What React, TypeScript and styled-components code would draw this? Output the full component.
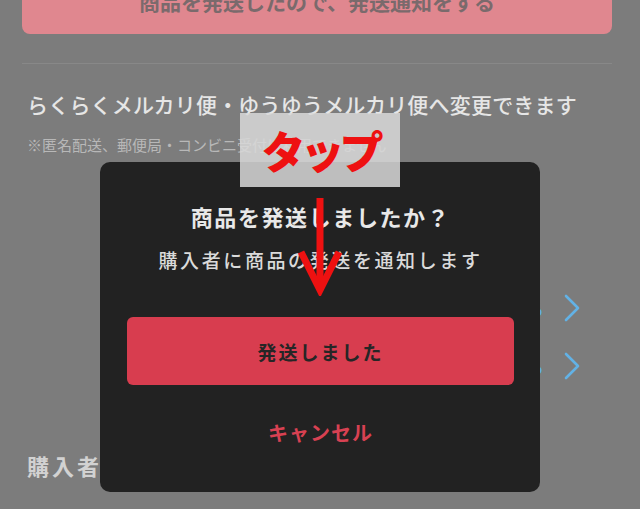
import React from 'react';
import styled, { createGlobalStyle } from 'styled-components';

const GlobalStyle = createGlobalStyle`
    html, body {
        margin: 0;
        padding: 0;
        background: #7c7c7c;
        overflow: hidden;
    }
    * {
        box-sizing: border-box;
    }
`;

const FONT = `'Noto Sans CJK JP', 'Noto Sans', sans-serif`;

const Screen = styled.div`
    position: relative;
    width: 640px;
    height: 509px;
    overflow: hidden;
    background: #7c7c7c;
    font-family: ${FONT};
`;

const Content = styled.div`
    display: flex;
    flex-direction: column;
    padding: 0 28px 0 22px;
`;

const NotifyButton = styled.div`
    display: flex;
    align-items: center;
    justify-content: center;
    height: 64px;
    margin-top: -30px;
    padding-bottom: 2px;
    border-radius: 0 0 8px 8px;
    background: #e0878f;
    color: #7a6a6c;
    font-size: 21px;
    font-weight: 700;
`;

const Divider = styled.hr`
    margin: 29px 0 0;
    border: none;
    height: 1px;
    background: #888888;
`;

const ShippingTitle = styled.div`
    margin-top: 25px;
    padding-left: 5px;
    font-size: 21px;
    font-weight: 500;
    line-height: 30px;
    color: #e6e6e6;
    letter-spacing: 0.2px;
`;

const ShippingNote = styled.div`
    margin-top: 15px;
    padding-left: 5px;
    font-size: 15px;
    line-height: 22px;
    color: #b8b8b8;
`;

const Rows = styled.div`
    display: flex;
    flex-direction: column;
    margin-top: 123px;
`;

const Row = styled.div`
    display: flex;
    align-items: center;
    justify-content: flex-end;
    height: 58px;
    padding-right: 32px;
    gap: 20px;
`;

const RowValue = styled.span`
    font-size: 17px;
    color: #62b2e6;
`;

const SectionHeading = styled.div`
    margin-top: 55px;
    padding-left: 5px;
    font-size: 22px;
    font-weight: 700;
    line-height: 30px;
    color: #d2d2d2;
    letter-spacing: 3px;
`;

const Dialog = styled.div`
    position: absolute;
    left: 100px;
    top: 162px;
    width: 440px;
    height: 330px;
    display: flex;
    flex-direction: column;
    align-items: center;
    padding: 39px 26px 0 27px;
    background: #222222;
    border-radius: 10px;
`;

const DialogTitle = styled.div`
    font-size: 22px;
    font-weight: 700;
    line-height: 30px;
    color: #e8e8e8;
    letter-spacing: 1.6px;
`;

const DialogText = styled.div`
    margin-top: 16px;
    font-size: 19px;
    font-weight: 500;
    line-height: 26px;
    color: #dadada;
    letter-spacing: 2.6px;
`;

const PrimaryButton = styled.button`
    width: 100%;
    height: 68px;
    margin-top: 44px;
    border: none;
    border-radius: 6px;
    background: #d83d4f;
    color: #262626;
    font-family: ${FONT};
    font-size: 19px;
    font-weight: 700;
    letter-spacing: 2px;
`;

const CancelButton = styled.button`
    margin-top: 32px;
    border: none;
    background: none;
    color: #d84152;
    font-family: ${FONT};
    font-size: 20px;
    font-weight: 700;
    letter-spacing: 1px;
`;

const TapLabel = styled.div`
    position: absolute;
    left: 240px;
    top: 113px;
    width: 160px;
    height: 74px;
    display: flex;
    align-items: center;
    justify-content: center;
    background: rgba(216, 216, 216, 0.86);
    color: #ee1111;
    font-size: 44px;
    font-weight: 900;
    letter-spacing: -5px;
`;

const Arrow = styled.svg`
    position: absolute;
    left: 296px;
    top: 196px;
`;

const Chevron = () => (
    <svg width="16" height="28" viewBox="0 0 16 28">
        <polyline
            points="2,2 14,14 2,26"
            fill="none"
            stroke="#62b2e6"
            strokeWidth="2.6"
            strokeLinecap="round"
            strokeLinejoin="round"
        />
    </svg>
);

const App: React.FC = () => (
    <Screen>
        <GlobalStyle />
        <Content>
            <NotifyButton>商品を発送したので、発送通知をする</NotifyButton>
            <Divider />
            <ShippingTitle>
                らくらくメルカリ便・ゆうゆうメルカリ便へ変更できます
            </ShippingTitle>
            <ShippingNote>
                ※匿名配送、郵便局・コンビニ受付は利用できません
            </ShippingNote>
            <Rows>
                <Row>
                    <RowValue>変更する</RowValue>
                    <Chevron />
                </Row>
                <Row>
                    <RowValue>確認する</RowValue>
                    <Chevron />
                </Row>
            </Rows>
            <SectionHeading>購入者情報</SectionHeading>
        </Content>

        <Dialog>
            <DialogTitle>商品を発送しましたか？</DialogTitle>
            <DialogText>購入者に商品の発送を通知します</DialogText>
            <PrimaryButton>発送しました</PrimaryButton>
            <CancelButton>キャンセル</CancelButton>
        </Dialog>

        <TapLabel>タップ</TapLabel>
        <Arrow width="48" height="100" viewBox="0 0 48 100">
            <line x1="24" y1="2" x2="24" y2="92" stroke="#ee1111" strokeWidth="7" />
            <polyline
                points="5,56 24,94 43,56"
                fill="none"
                stroke="#ee1111"
                strokeWidth="7"
                strokeLinejoin="miter"
            />
        </Arrow>
    </Screen>
);

export default App;
